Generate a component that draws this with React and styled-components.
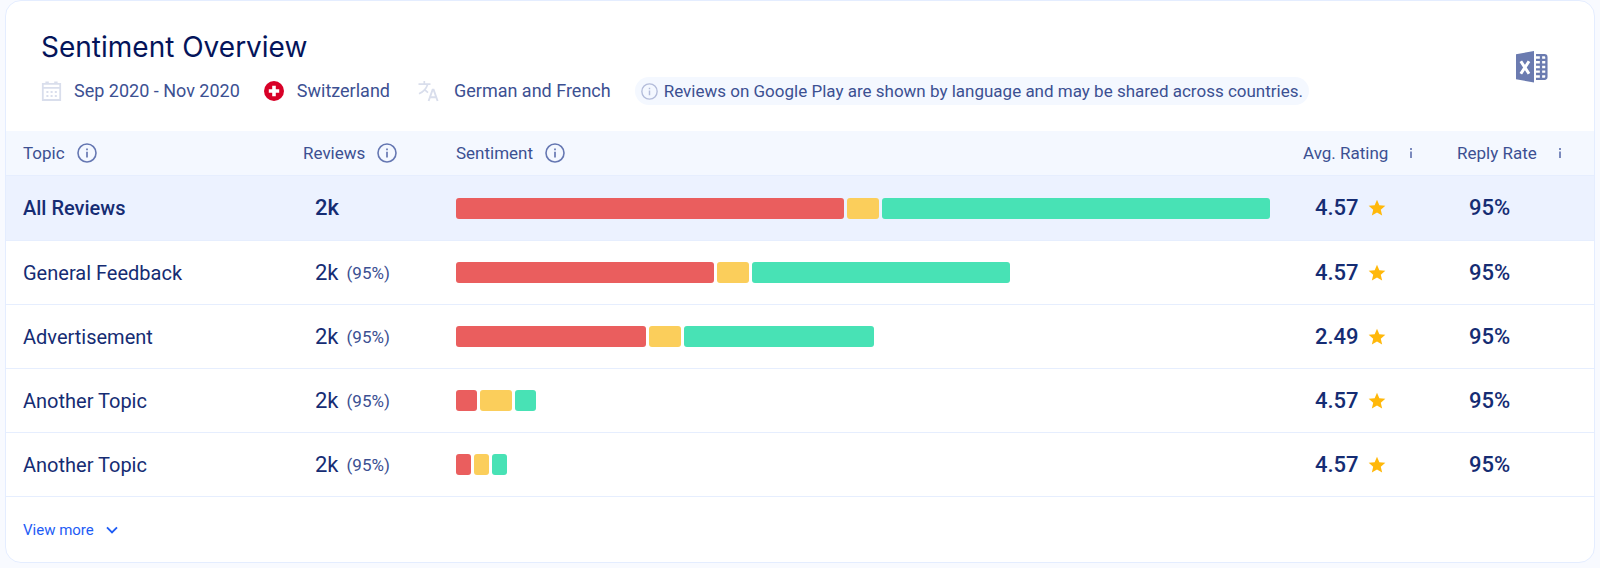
import React from 'react';
import styled, { createGlobalStyle } from 'styled-components';
import { MdStar } from 'react-icons/md';

const GlobalStyle = createGlobalStyle`
  *, *::before, *::after { box-sizing: border-box; }
  body {
    margin: 0;
    background: #f8faff;
    font-family: Roboto, "Liberation Sans", sans-serif;
    color: #152c73;
  }
`;

const Page = styled.main`
  padding: 0 5px 5px;
`;

const Card = styled.section`
  background: #fff;
  border: 1px solid #e4edff;
  border-radius: 16px;
  overflow: hidden;
`;

const CardHeader = styled.header`
  display: flex;
  align-items: center;
  justify-content: space-between;
  padding: 28px 46px 26px 35px;
`;

const Title = styled.h2`
  margin: 0 0 12px;
  font-family: Inter, "Liberation Sans", sans-serif;
  font-size: 28px;
  line-height: 36px;
  font-weight: 400;
  color: #04145a;
`;

const Meta = styled.div`
  display: flex;
  align-items: center;
  flex-wrap: wrap;
  gap: 24px;
`;

const MetaItem = styled.span`
  display: inline-flex;
  align-items: center;
  gap: 12px;
  font-size: 18px;
  line-height: 28px;
  color: #3c5092;

  svg { flex: none; color: #d9deec; }
`;

const Notice = styled.p`
  display: inline-flex;
  align-items: center;
  gap: 6px;
  margin: 0;
  padding: 0 6px;
  border-radius: 14px;
  background: #f4f8ff;
  font-size: 17px;
  line-height: 28px;
  color: #3c5092;

  svg { color: #b3bcda; }
`;

const IconButton = styled.button`
  display: flex;
  padding: 0;
  border: 0;
  background: none;
  color: #6b7bb0;
  cursor: pointer;
`;

const Table = styled.table`
  width: 100%;
  table-layout: fixed;
  border-collapse: separate;
  border-spacing: 0;
`;

const Col = styled.col`
  width: ${(p) => p.$width || 'auto'};
`;

const HeadCell = styled.th`
  height: 45px;
  padding: 0 0 0 17px;
  border-bottom: 1px solid #e6eefe;
  background: #f4f8ff;
  font-size: 17px;
  line-height: 24px;
  font-weight: 400;
  text-align: left;
  color: #3c5092;
`;

const HeadLabel = styled.span`
  display: flex;
  align-items: center;
  gap: ${(p) => (p.$wide ? '20px' : '12px')};
  white-space: nowrap;

  svg { color: #6577b2; }
`;

const Row = styled.tr`
  height: ${(p) => (p.$highlight ? '65px' : '64px')};
  background: ${(p) => (p.$highlight ? '#ecf2ff' : '#fff')};
`;

const Cell = styled.td`
  padding: 0 16px 0 ${(p) => (p.$indent ? '29px' : '17px')};
  border-bottom: 1px solid #e6eefe;
  white-space: nowrap;
`;

const TopicCell = styled.th`
  padding: 0 0 0 17px;
  border-bottom: 1px solid #e6eefe;
  font-size: 20px;
  line-height: 28px;
  font-weight: ${(p) => (p.$strong ? 500 : 400)};
  text-align: left;
  color: #152c73;
`;

const Figures = styled.span`
  display: flex;
  align-items: center;
  gap: 8px;
`;

const Value = styled.span`
  font-size: 22px;
  line-height: 28px;
  font-weight: ${(p) => (p.$strong ? 500 : 400)};
`;

const Share = styled.span`
  font-size: 17px;
  line-height: 28px;
  color: #3c5092;
`;

const Star = styled(MdStar)`
  color: #ffb80a;
`;

const Bar = styled.div`
  display: flex;
  gap: 3px;
  height: 21px;
  width: ${(p) => p.$share}%;
`;

const Segment = styled.span`
  flex: ${(p) => p.$weight} 1 0;
  border-radius: 3px;
  background: ${(p) => p.$color};
`;

const CardFooter = styled.footer`
  padding: 21px 17px 20px;
`;

const MoreButton = styled.button`
  display: inline-flex;
  align-items: center;
  gap: 12px;
  padding: 0;
  border: 0;
  background: none;
  font-family: inherit;
  font-size: 15px;
  line-height: 24px;
  color: #1e5cf5;
  cursor: pointer;
`;

const InfoIcon = ({ size = 20 }) => (
  <svg width={size} height={size} viewBox="0 0 20 20" fill="none" stroke="currentColor" aria-hidden="true">
    <circle cx="10" cy="10" r="9" strokeWidth="1.6" />
    <path d="M10 8.7v5.8M10 5.6v1.7" strokeWidth="1.7" />
  </svg>
);

const InfoMark = () => (
  <svg width="6" height="20" viewBox="0 0 6 20" fill="none" stroke="currentColor" aria-hidden="true">
    <path d="M3 8.5v6.5M3 5v2" strokeWidth="1.7" />
  </svg>
);

const CalendarIcon = () => (
  <svg width="21" height="20" viewBox="0 0 21 20" fill="none" stroke="currentColor" aria-hidden="true">
    <path d="M1.8 2.9h17.4v16.1H1.8z" strokeWidth="1.8" />
    <path d="M1.5 6.9h18" strokeWidth="1.6" />
    <path d="M4.4 1.4h3.4M13.2 1.4h3.4" strokeWidth="2" />
    <path d="M5.4 11h11M5.4 15h11" strokeWidth="2" strokeDasharray="2 2.2" />
  </svg>
);

const SwissFlag = () => (
  <svg width="21" height="20" viewBox="0 0 21 20" aria-hidden="true">
    <circle cx="10" cy="10" r="10" fill="#d80027" />
    <path d="M8.2 4.8h3.6v3.4h3.4v3.6h-3.4v3.4H8.2v-3.4H4.8V8.2h3.4z" fill="#fff" />
  </svg>
);

const TranslateIcon = () => (
  <svg width="28" height="22" viewBox="0 0 28 22" fill="none" stroke="currentColor" aria-hidden="true">
    <path d="M4.5 4.2h12M10.3 1v3.2M13.6 4.4c-1.4 4.4-4.4 7.4-8.6 9.4M10.6 9.6l3.4 3" strokeWidth="1.7" />
    <path d="m14.6 21 4-11.4h1L23.600 21M16 17.200h6.400" strokeWidth="1.9" />
  </svg>
);

const ExcelIcon = () => (
  <svg width="32" height="32" viewBox="0 0 32 32" aria-hidden="true">
    <path d="M0 3.2 18 0v31.6L0 28.2z" fill="currentColor" />
    <path d="m4.800 10.200 8.200 12.600M13 10.200 4.800 22.800" fill="none" stroke="#fff" strokeWidth="3" />
    <path
      d="M20 4.200h8.400a2 2 0 0 1 2 2v19.600a2 2 0 0 1-2 2H20M20 8.900h10M20 13.600h10M20 18.300h10M20 23h10M25 4v24"
      fill="none"
      stroke="currentColor"
      strokeWidth="2.300"
    />
  </svg>
);

const ChevronIcon = () => (
  <svg width="12" height="8" viewBox="0 0 12 8" fill="none" stroke="currentColor" aria-hidden="true">
    <path d="m1 1.4 5 5 5-5" strokeWidth="1.9" />
  </svg>
);

const COLORS = { negative: '#ea5e5e', neutral: '#fbce5b', positive: '#48e2b5' };

const TOPICS = [
  { name: 'All Reviews', rating: '4.57', share: 100, split: [388, 32, 388], highlight: true },
  { name: 'General Feedback', percent: '(95%)', rating: '4.57', share: 68, split: [258, 32, 258] },
  { name: 'Advertisement', percent: '(95%)', rating: '2.49', share: 51.3, split: [190, 32, 190] },
  { name: 'Another Topic', percent: '(95%)', rating: '4.57', share: 9.8, split: [21, 32, 21] },
  { name: 'Another Topic', percent: '(95%)', rating: '4.57', share: 6.3, split: [15, 15, 15] },
];

const SentimentBar = ({ share, split }) => (
  <Bar $share={share} role="img" aria-label="Sentiment split">
    <Segment $weight={split[0]} $color={COLORS.negative} />
    <Segment $weight={split[1]} $color={COLORS.neutral} />
    <Segment $weight={split[2]} $color={COLORS.positive} />
  </Bar>
);

export default function App() {
  return (
    <Page>
      <GlobalStyle />
      <Card>
        <CardHeader>
          <div>
            <Title>Sentiment Overview</Title>
            <Meta>
              <MetaItem><CalendarIcon />Sep 2020 - Nov 2020</MetaItem>
              <MetaItem><SwissFlag />Switzerland</MetaItem>
              <MetaItem><TranslateIcon />German and French</MetaItem>
              <Notice>
                <InfoIcon size={17} />
                Reviews on Google Play are shown by language and may be shared across countries.
              </Notice>
            </Meta>
          </div>
          <IconButton type="button" aria-label="Export to Excel"><ExcelIcon /></IconButton>
        </CardHeader>
        <Table>
          <colgroup>
            <Col $width="280px" />
            <Col $width="153px" />
            <Col />
            <Col $width="154px" />
            <Col $width="154px" />
          </colgroup>
          <thead>
            <tr>
              <HeadCell scope="col"><HeadLabel>Topic <InfoIcon /></HeadLabel></HeadCell>
              <HeadCell scope="col"><HeadLabel>Reviews <InfoIcon /></HeadLabel></HeadCell>
              <HeadCell scope="col"><HeadLabel>Sentiment <InfoIcon /></HeadLabel></HeadCell>
              <HeadCell scope="col"><HeadLabel $wide>Avg. Rating <InfoMark /></HeadLabel></HeadCell>
              <HeadCell scope="col"><HeadLabel $wide>Reply Rate <InfoMark /></HeadLabel></HeadCell>
            </tr>
          </thead>
          <tbody>
            {TOPICS.map((topic, i) => (
              <Row key={i} $highlight={topic.highlight}>
                <TopicCell scope="row" $strong={topic.highlight}>{topic.name}</TopicCell>
                <Cell $indent>
                  <Figures>
                    <Value $strong={topic.highlight}>2k</Value>
                    {topic.percent && <Share>{topic.percent}</Share>}
                  </Figures>
                </Cell>
                <Cell><SentimentBar share={topic.share} split={topic.split} /></Cell>
                <Cell $indent>
                  <Figures><Value $strong>{topic.rating}</Value><Star size={20} /></Figures>
                </Cell>
                <Cell $indent><Value $strong>95%</Value></Cell>
              </Row>
            ))}
          </tbody>
        </Table>
        <CardFooter>
          <MoreButton type="button">View more <ChevronIcon /></MoreButton>
        </CardFooter>
      </Card>
    </Page>
  );
}
